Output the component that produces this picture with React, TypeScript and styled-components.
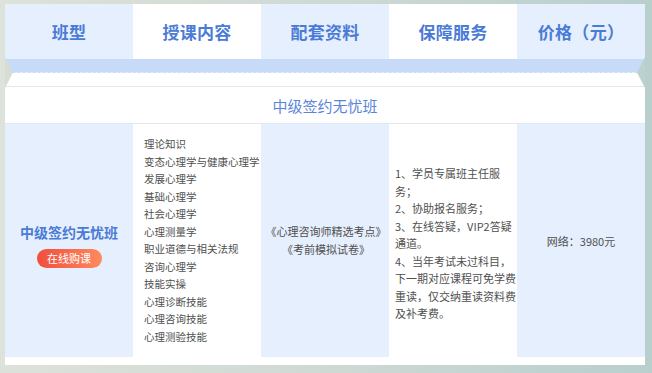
import React from 'react';
import styled, { createGlobalStyle } from 'styled-components';

const GlobalStyle = createGlobalStyle`
  html, body {
    margin: 0;
    padding: 0;
  }
  body {
    width: 652px;
    height: 373px;
    overflow: hidden;
    background: linear-gradient(90deg, #dde2da 0%, #cfd9d4 50%, #b8cfce 100%);
    font-family: 'Noto Sans CJK SC', 'Noto Sans', sans-serif;
  }
`;

const Page = styled.div`
  padding: 4px 7px 0 5px;
`;

const Panel = styled.div`
  position: relative;
  width: 640px;
  background: #fff;
  padding-bottom: 8px;
`;

const Notch = styled.span<{ $side: 'left' | 'right' }>`
  position: absolute;
  top: 53px;
  ${(p) => (p.$side === 'left' ? 'left: 0;' : 'right: 0;')}
  width: 8px;
  height: 31px;
  background: ${(p) => (p.$side === 'left' ? '#d7ddd5' : '#bcd2d1')};
  clip-path: ${(p) =>
    p.$side === 'left'
      ? 'polygon(0 0, 100% 50%, 0 100%)'
      : 'polygon(100% 0, 0 50%, 100% 100%)'};
`;

const Grid = styled.div<{ $height: number }>`
  display: grid;
  grid-template-columns: repeat(5, 128px);
  height: ${(p) => p.$height}px;
`;

const HeadCell = styled.div<{ $tint: boolean }>`
  display: flex;
  align-items: center;
  justify-content: center;
  background: ${(p) => (p.$tint ? '#e6effd' : '#ffffff')};
  color: #4a7bd6;
  font-size: 17px;
  font-weight: 700;
  letter-spacing: 0.3px;
`;

const Band = styled.div`
  height: 13px;
  background: #c7dbf8;
  border-bottom: 1px dashed #e3ecfb;
`;

const Gap = styled.div`
  height: 13px;
`;

const TitleRow = styled.div`
  height: 36px;
  border-top: 1px solid #dfe7f2;
  border-bottom: 1px solid #dfe7f2;
  display: flex;
  align-items: center;
  justify-content: center;
  color: #5a86d8;
  font-size: 15px;
`;

const Cell = styled.div<{ $tint: boolean; $align?: 'start' | 'center' }>`
  background: ${(p) => (p.$tint ? '#e6effd' : '#ffffff')};
  display: flex;
  flex-direction: column;
  justify-content: ${(p) => (p.$align === 'start' ? 'flex-start' : 'center')};
  color: #505050;
  font-size: 11px;
  line-height: 17.5px;
`;

const ClassCell = styled(Cell)`
  align-items: center;
  gap: 7px;
  padding-top: 8px;
`;

const ClassName = styled.div`
  color: #4a7bd6;
  font-size: 14px;
  font-weight: 700;
  line-height: 20px;
`;

const BuyButton = styled.button`
  width: 65px;
  height: 19px;
  border: none;
  border-radius: 10px;
  padding: 0;
  background: linear-gradient(90deg, #f04e3c 0%, #ff8a5e 100%);
  color: #fff;
  font-family: inherit;
  font-size: 11px;
  line-height: 19px;
  cursor: pointer;
`;

const SubjectList = styled.ul`
  list-style: none;
  margin: 0;
  padding: 11px 0 0 11px;
  font-size: 10.5px;
  white-space: nowrap;
`;

const Materials = styled.div`
  text-align: center;
  padding-left: 2px;
`;

const Services = styled.div`
  padding: 7px 0 0 6px;
`;

const Price = styled.div`
  text-align: center;
  padding-top: 3px;
`;

const headers = ['班型', '授课内容', '配套资料', '保障服务', '价格（元）'];

const subjects = [
  '理论知识',
  '变态心理学与健康心理学',
  '发展心理学',
  '基础心理学',
  '社会心理学',
  '心理测量学',
  '职业道德与相关法规',
  '咨询心理学',
  '技能实操',
  '心理诊断技能',
  '心理咨询技能',
  '心理测验技能',
];

const App = () => {
  return (
    <>
      <GlobalStyle />
      <Page>
        <Panel>
          <Grid $height={55}>
            {headers.map((h, i) => (
              <HeadCell key={h} $tint={i % 2 === 0}>
                {h}
              </HeadCell>
            ))}
          </Grid>
          <Band />
          <Gap />
          <TitleRow>中级签约无忧班</TitleRow>
          <Grid $height={233}>
            <ClassCell $tint>
              <ClassName>中级签约无忧班</ClassName>
              <BuyButton>在线购课</BuyButton>
            </ClassCell>
            <Cell $tint={false} $align="start">
              <SubjectList>
                {subjects.map((s) => (
                  <li key={s}>{s}</li>
                ))}
              </SubjectList>
            </Cell>
            <Cell $tint>
              <Materials>
                《心理咨询师精选考点》
                <br />
                《考前模拟试卷》
              </Materials>
            </Cell>
            <Cell $tint={false}>
              <Services>
                1、学员专属班主任服务；
                <br />
                2、协助报名服务；
                <br />
                3、在线答疑，VIP2答疑通道。
                <br />
                4、当年考试未过科目，下一期对应课程可免学费重读，仅交纳重读资料费及补考费。
              </Services>
            </Cell>
            <Cell $tint>
              <Price>网络：3980元</Price>
            </Cell>
          </Grid>
          <Notch $side="left" />
          <Notch $side="right" />
        </Panel>
      </Page>
    </>
  );
};

export default App;
